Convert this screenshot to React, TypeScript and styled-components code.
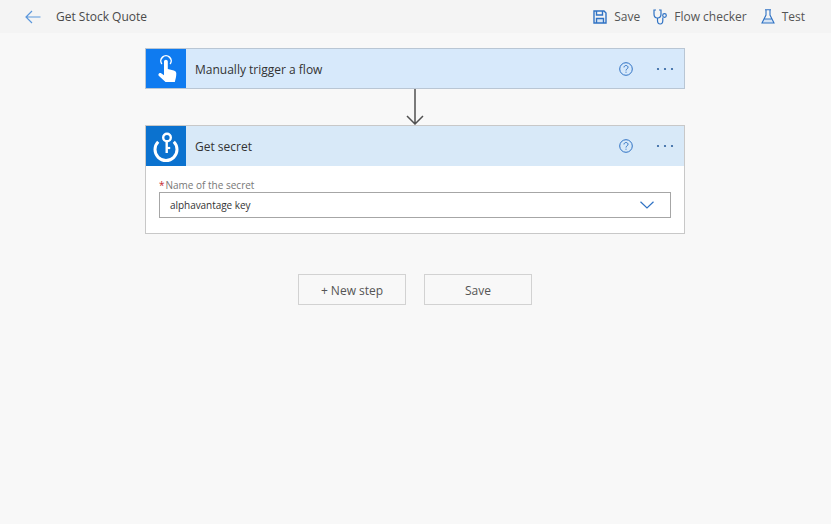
import { createGlobalStyle, styled } from "styled-components";

const GlobalStyle = createGlobalStyle`
    html, body {
        margin: 0;
        height: 100%;
        background-color: #f8f8f8;
        font-family: "Open Sans", "Noto Sans", sans-serif;
        color: #333;
    }
`

const TopBar = styled.header`
    height: 33px;
    background-color: #f4f4f4;
    display: flex;
    align-items: center;
    padding-left: 25px;
    padding-right: 26px;
`

const BackButton = styled.span`
    display: flex;
    width: 31px;
`

const FlowName = styled.span`
    font-size: 12px;
    color: #4a4a4a;
    flex: 1;
`

const Action = styled.span<{ $gap: number; $left: number }>`
    display: flex;
    align-items: center;
    gap: ${(p) => p.$gap}px;
    font-size: 12px;
    color: #555;
    margin-left: ${(p) => p.$left}px;
`

const Canvas = styled.main`
    display: flex;
    flex-direction: column;
    align-items: center;
    padding-top: 15px;
    padding-right: 1px;
`

const Card = styled.section<{ $border: string }>`
    width: 540px;
    box-sizing: border-box;
    border: 1px solid ${(p) => p.$border};
    background-color: #fff;
`

const CardHeader = styled.div<{ $bg: string; $height: number }>`
    height: ${(p) => p.$height}px;
    background-color: ${(p) => p.$bg};
    display: flex;
    align-items: center;
`

const IconBox = styled.div<{ $bg: string }>`
    width: 40px;
    height: 100%;
    background-color: ${(p) => p.$bg};
    display: flex;
    align-items: center;
    justify-content: center;
`

const CardTitle = styled.span`
    font-size: 12px;
    line-height: 16px;
    padding-top: 2px;
    color: #333;
    margin-left: 9px;
    flex: 1;
`

const HelpIcon = styled.span`
    display: flex;
    margin-right: 23px;
`

const MoreIcon = styled.span`
    display: flex;
    margin-right: 10px;
`

const Connector = styled.div`
    height: 36px;
    display: flex;
    justify-content: center;
`

const CardBody = styled.div`
    padding: 13px 13px 15px 13px;
`

const FieldLabel = styled.label`
    display: block;
    font-size: 10px;
    line-height: 13px;
    color: #777;
    height: 13px;
`

const Required = styled.span`
    color: #c4262e;
    margin-right: 1px;
`

const SelectBox = styled.div`
    height: 26px;
    box-sizing: border-box;
    border: 1px solid #a6a6a6;
    display: flex;
    align-items: center;
    justify-content: space-between;
    padding: 0 16px 0 10px;
    font-size: 10px;
    letter-spacing: -0.05px;
    color: #333;
`

const ButtonRow = styled.div`
    display: flex;
    gap: 18px;
    margin-top: 40px;
`

const StepButton = styled.button`
    width: 108px;
    height: 31px;
    box-sizing: border-box;
    border: 1px solid #d2d2d2;
    background-color: #f8f8f8;
    font-family: inherit;
    font-size: 12px;
    color: #555;
    padding: 1px 0 0 0;
`

function Help() {
    return (
        <HelpIcon>
            <svg width="14" height="14" viewBox="0 0 14 14" fill="none" stroke="#2f72c4" strokeWidth="1">
                <circle cx="7" cy="7" r="6.300" />
                <path d="M5 5.400c0-1.200 1-1.900 2-1.900s2 .7 2 1.800c0 1.600-2 1.500-2 3.200" />
                <path d="M7 9.700v1" />
            </svg>
        </HelpIcon>
    )
}

function More() {
    return (
        <MoreIcon>
            <svg width="18" height="4" viewBox="0 0 18 4" fill="#2c5f9e">
                <circle cx="2" cy="2" r="1.100" />
                <circle cx="9" cy="2" r="1.100" />
                <circle cx="16" cy="2" r="1.100" />
            </svg>
        </MoreIcon>
    )
}

export default function App() {
    return (
        <>
            <GlobalStyle />
            <TopBar>
                <BackButton>
                    <svg width="16" height="14" viewBox="0 0 16 14" fill="none" stroke="#5b97dc" strokeWidth="1.2">
                        <path d="M15.5 7H1M7 1 1 7l6 6" />
                    </svg>
                </BackButton>
                <FlowName>Get Stock Quote</FlowName>
                <Action $gap={7} $left={13}>
                    <svg width="14" height="14" viewBox="0 0 14 14" fill="none" stroke="#2f72c4" strokeWidth="1.4">
                        <path fill="#d5e4f5" stroke="none" d="M3.500 8.500h7V13h-7z" />
                        <path d="M1 1h10l2 2v10H1zM3.500 1v4h6V1M3.500 13V8.500h7V13" />
                    </svg>
                    Save
                </Action>
                <Action $gap={6} $left={13}>
                    <svg width="15" height="16" viewBox="0 0 15 16" fill="none" stroke="#2f72c4" strokeWidth="1.2">
                        <path d="M3 1H1v4c0 2.500 1.500 4 3.500 4S8 7.500 8 5V1H6" />
                        <path d="M4.500 9v2.500c0 2 1 3.500 2.700 3.500s2.600-1.500 2.600-3.500V8.500" />
                        <circle cx="11.500" cy="6.500" r="1.800" />
                    </svg>
                    Flow checker
                </Action>
                <Action $gap={7} $left={14}>
                    <svg width="14" height="15" viewBox="0 0 14 15" fill="none" stroke="#2f72c4" strokeWidth="1.1">
                        <path fill="#d5e4f5" stroke="none" d="M3.500 10h7l2.500 4H1z" />
                        <path d="M4 .8h6M5 1v5L1 14h12L9 6V1M3.500 10h7" />
                    </svg>
                    Test
                </Action>
            </TopBar>
            <Canvas>
                <Card $border="#b9c6d4">
                    <CardHeader $bg="#d7e9fb" $height={39}>
                        <IconBox $bg="#0f7bf0">
                            <svg width="40" height="39" viewBox="0 0 40 39" fill="none">
                                <path d="M15.800 15a5.200 5.200 0 1 1 8.400 0" stroke="#fff" strokeWidth="1.500" />
                                <path fill="#fff" d="M18 12.500c0-1 .9-1.700 1.900-1.700s1.900.7 1.900 1.700V20l6 1.500c1.500.4 2.500 1.500 2.500 3 0 3-.7 5.500-1.500 8.500H19.500L13 27c-.8-.8-.8-1.900 0-2.600.7-.6 1.700-.6 2.500 0l2.500 1.800z" />
                            </svg>
                        </IconBox>
                        <CardTitle>Manually trigger a flow</CardTitle>
                        <Help />
                        <More />
                    </CardHeader>
                </Card>
                <Connector>
                    <svg width="18" height="36" viewBox="0 0 18 36" fill="none" stroke="#505050" strokeWidth="1.500">
                        <path d="M9 0v35M1 27l8 8 8-8" />
                    </svg>
                </Connector>
                <Card $border="#c8c8c8">
                    <CardHeader $bg="#d8e9f8" $height={40}>
                        <IconBox $bg="#0b72cf">
                            <svg width="40" height="40" viewBox="0 0 40 40" fill="none" stroke="#fff">
                                <path d="M12.200 15.800A11 11 0 1 0 27.800 15.800" strokeWidth="3" />
                                <circle cx="21" cy="11.500" r="3.800" strokeWidth="2.400" />
                                <path d="M20.700 15v12" strokeWidth="2.400" />
                                <path d="M20.700 22h3.500" strokeWidth="2.200" />
                            </svg>
                        </IconBox>
                        <CardTitle>Get secret</CardTitle>
                        <Help />
                        <More />
                    </CardHeader>
                    <CardBody>
                        <FieldLabel><Required>*</Required>Name of the secret</FieldLabel>
                        <SelectBox>
                            alphavantage key
                            <svg width="14" height="8" viewBox="0 0 14 8" fill="none" stroke="#2f72c4" strokeWidth="1.200">
                                <path d="M.5.700 7 7l6.500-6.300" />
                            </svg>
                        </SelectBox>
                    </CardBody>
                </Card>
                <ButtonRow>
                    <StepButton>+ New step</StepButton>
                    <StepButton>Save</StepButton>
                </ButtonRow>
            </Canvas>
        </>
    )
}
